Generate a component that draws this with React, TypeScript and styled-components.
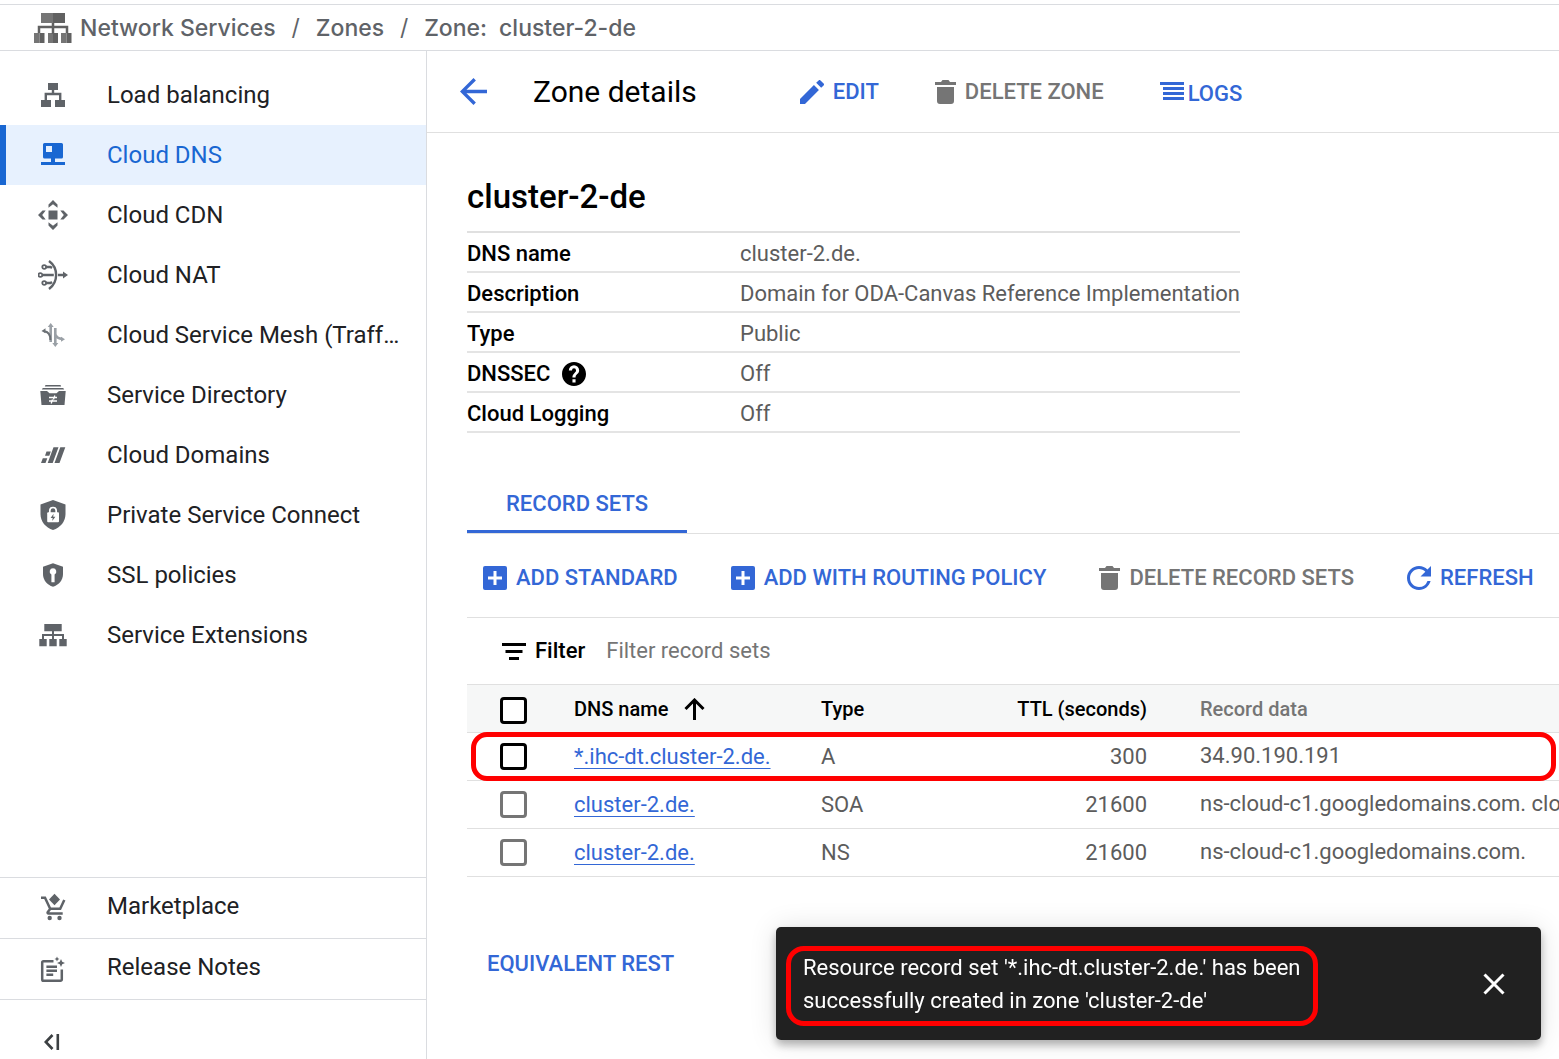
import React from "react";
import styled, { createGlobalStyle } from "styled-components";

const blue = "#3367d6";
const navBlue = "#1967d2";
const line = "#dadce0";
const rule = "#e0e0e0";
const muted = "#757575";
const bodyText = "#5c5c5c";
const iconGray = "#5f6368";

const GlobalStyle = createGlobalStyle`
  *, *::before, *::after { box-sizing: border-box; }
  body {
    margin: 0;
    background: #fff;
    color: #000;
    font-family: Roboto, "Liberation Sans", sans-serif;
    font-size: 22px;
    line-height: 28px;
  }
  button, input { font: inherit; }
  svg { display: block; flex: none; }
`;

const Page = styled.div`
  display: flex;
  flex-direction: column;
  min-height: 100vh;
  padding-top: 4px;
  overflow: hidden;
`;

const Breadcrumbs = styled.nav`
  display: flex;
  align-items: center;
  height: 47px;
  padding-left: 34px;
  border-top: 1px solid ${line};
  border-bottom: 1px solid ${line};
  color: ${iconGray};
  font-family: Inter, Roboto, sans-serif;
  font-size: 23px;
  font-weight: 500;
`;

const Crumb = styled.a`
  display: flex;
  gap: 12px;
  color: inherit;
  text-decoration: none;
`;

const FirstCrumb = styled(Crumb)`
  gap: 8px;
  align-items: center;
`;

const Slash = styled.span`
  width: 40px;
  text-align: center;
  font-weight: 400;
`;

const Columns = styled.div`
  display: flex;
  flex: 1;
`;

const Sidebar = styled.aside`
  display: flex;
  flex-direction: column;
  flex: none;
  width: 427px;
  padding-top: 14px;
  border-right: 1px solid ${line};
`;

const NavItem = styled.a<{ $active?: boolean }>`
  display: flex;
  align-items: center;
  gap: 39px;
  height: 60px;
  padding: 0 16px 0 32px;
  border-left: 6px solid ${(p) => (p.$active ? navBlue : "transparent")};
  background: ${(p) => (p.$active ? "#e7f1fe" : "transparent")};
  color: ${(p) => (p.$active ? navBlue : "#202124")};
  font-size: 24px;
  text-decoration: none;
`;

const NavLabel = styled.span`
  overflow: hidden;
  text-overflow: ellipsis;
  white-space: nowrap;
`;

const SidebarFooter = styled.div`
  display: flex;
  flex-direction: column;
  margin-top: auto;
`;

const FooterRow = styled.div`
  border-top: 1px solid ${line};
  ${NavLabel} { padding-bottom: 4px; }
`;

const Collapse = styled.button`
  display: flex;
  align-items: center;
  width: 100%;
  height: 59px;
  padding: 24px 0 0 44px;
  border: 0;
  background: none;
`;

const Main = styled.main`
  flex: 1;
  min-width: 0;
`;

const TitleBar = styled.header`
  display: flex;
  align-items: center;
  height: 82px;
  padding-left: 33px;
  border-bottom: 1px solid ${rule};
`;

const Title = styled.h1`
  margin: 0 103px 0 46px;
  font-size: 30px;
  font-weight: 400;
  line-height: 40px;
`;

const Actions = styled.div<{ $gap: number }>`
  display: flex;
  align-items: center;
  gap: ${(p) => p.$gap}px;
`;

const TextButton = styled.button<{ $muted?: boolean; $tight?: boolean }>`
  display: flex;
  align-items: center;
  gap: ${(p) => (p.$tight ? 4 : 9)}px;
  padding: ${(p) => (p.$tight ? "4px 0 0" : "0")};
  border: 0;
  background: none;
  color: ${(p) => (p.$muted ? muted : blue)};
  font-weight: 500;
  white-space: nowrap;
`;

const IconButton = styled.button`
  padding: 0;
  border: 0;
  background: none;
  color: ${blue};
`;

const Content = styled.div`
  padding-left: 40px;
`;

const ZoneName = styled.h2`
  margin: 0;
  padding: 44px 0 14px;
  font-size: 33px;
  font-weight: 500;
  line-height: 40px;
`;

const Properties = styled.table`
  border-collapse: separate;
  border-spacing: 0;
  border-top: 2px solid ${rule};
  th, td {
    height: 40px;
    padding: 4px 0 0;
    border-bottom: 2px solid #e4e4e4;
    text-align: left;
    white-space: nowrap;
  }
  th { width: 273px; font-weight: 500; }
  td { color: ${bodyText}; }
`;

const WithHelp = styled.span`
  display: flex;
  align-items: center;
  gap: 12px;
`;

const Tabs = styled.div`
  display: flex;
  margin-top: 40px;
  border-bottom: 1px solid ${rule};
`;

const Tab = styled.button`
  width: 220px;
  height: 60px;
  padding: 5px 0 0;
  border: 0;
  border-bottom: 3px solid ${blue};
  background: none;
  color: ${blue};
  font-weight: 500;
`;

const RecordBar = styled.div`
  display: flex;
  height: 84px;
  padding: 4px 0 0 16px;
  border-bottom: 1px solid ${rule};
`;

const FilterBar = styled.div`
  display: flex;
  align-items: center;
  height: 66px;
  padding-left: 35px;
`;

const FilterLabel = styled.label`
  display: flex;
  align-items: center;
  gap: 9px;
  margin-right: 21px;
  font-weight: 500;
`;

const FilterInput = styled.input`
  flex: 1;
  min-width: 0;
  padding: 0;
  border: 0;
  outline: 0;
  background: none;
  &::placeholder { color: ${muted}; opacity: 1; }
`;

const Records = styled.table`
  width: 100%;
  table-layout: fixed;
  border-collapse: separate;
  border-spacing: 0;
  border-top: 1px solid ${rule};
`;

const Row = styled.tr`
  position: relative;
`;

const HeadCell = styled.th<{ $w?: number; $end?: boolean; $muted?: boolean }>`
  width: ${(p) => (p.$w ? p.$w + "px" : "auto")};
  height: 48px;
  padding: ${(p) => (p.$muted ? "0 0 0 53px" : "0")};
  border-bottom: 1px solid ${rule};
  background: #f6f7f7;
  color: ${(p) => (p.$muted ? muted : "#000")};
  font-size: 20px;
  font-weight: 500;
  text-align: ${(p) => (p.$end ? "right" : "left")};
`;

const CheckHead = styled(HeadCell)`
  padding-top: 4px;
`;

const Sorted = styled.span`
  display: flex;
  align-items: center;
  gap: 16px;
`;

const Cell = styled.td<{ $end?: boolean }>`
  height: 48px;
  padding: 0;
  border-bottom: 1px solid ${rule};
  color: ${bodyText};
  text-align: ${(p) => (p.$end ? "right" : "left")};
  white-space: nowrap;
`;

const DataCell = styled(Cell)`
  padding: 0 0 2px 53px;
  overflow: hidden;
`;

const Check = styled.input<{ $strong?: boolean }>`
  display: block;
  appearance: none;
  width: 27px;
  height: 27px;
  margin: 0 0 0 33px;
  border: 3px solid ${(p) => (p.$strong ? "#000" : muted)};
  border-radius: 4px;
  background: #fff;
`;

const RecordLink = styled.a`
  color: ${blue};
  text-decoration: underline 1px;
  text-underline-offset: 4px;
`;

const Highlight = styled.span`
  position: absolute;
  inset: -1px 3px 0 4px;
  border: 5px solid #f00;
  border-radius: 16px;
  pointer-events: none;
`;

const RestRow = styled.div`
  padding: 73px 0 60px 20px;
`;

const Snackbar = styled.div`
  position: fixed;
  right: 18px;
  bottom: 19px;
  display: flex;
  justify-content: space-between;
  align-items: center;
  width: 765px;
  max-width: calc(100vw - 36px);
  padding: 19px 36px 14px 10px;
  border-radius: 5px;
  background: #212121;
  box-shadow: 0 5px 8px rgba(0, 0, 0, 0.28), 0 1px 28px rgba(0, 0, 0, 0.12);
  color: #fff;
`;

const Message = styled.p`
  width: 532px;
  margin: 0;
  padding: 0 0 4px 12px;
  border: 5px solid #f00;
  border-radius: 18px;
  line-height: 33px;
`;

const CloseButton = styled(IconButton)`
  padding-bottom: 4px;
  color: #fff;
`;

const NavIcon = ({ children }: { children: React.ReactNode }) => (
  <svg width="30" height="30" viewBox="0 0 30 30" fill="currentColor" aria-hidden="true">
    {children}
  </svg>
);

const stroke = { fill: "none", stroke: "currentColor" };

const icons: Record<string, React.ReactNode> = {
  load: (
    <g color={iconGray}>
      <path d="M10 3h10v7H10zM3 20h10v7H3zM17 20h10v7H17z" />
      <path {...stroke} strokeWidth="2.4" d="M15 10v4M7.8 20v-6h14.4v6" />
    </g>
  ),
  dns: (
    <path fillRule="evenodd" d="M6.5 3h17A1.5 1.5 0 0 1 25 4.500V17a1.500 1.500 0 0 1-1.500 1.500H17V22h10v3H3v-3h10v-3.500H6.500A1.500 1.500 0 0 1 5 17V4.500A1.500 1.500 0 0 1 6.500 3zM8 6v6h6V6z" />
  ),
  cdn: (
    <g color={iconGray}>
      <path d="M10.500 10.500h9v9h-9z" />
      <path d="M15 0l4.500 4.500v3.200L15 4.200l-4.500 3.500V4.500zM15 30l4.500-4.500v-3.200L15 25.800l-4.500-3.500v3.200zM0 15l4.500-4.500h3.200L4.200 15l3.500 4.500H4.500zM30 15l-4.500-4.500h-3.200l3.500 4.500-3.500 4.500h3.200z" />
    </g>
  ),
  nat: (
    <g color={iconGray}>
      <path {...stroke} strokeWidth="2.400" d="M11 1c9.500 7 9.500 21 0 28" />
      <g {...stroke} strokeWidth="1.800">
        <circle cx="6.200" cy="7" r="1.900" />
        <circle cx="2.400" cy="15" r="1.900" />
        <circle cx="6.200" cy="23" r="1.900" />
      </g>
      <path {...stroke} strokeWidth="2.400" d="M8 7h4.500l1.500 1M4.400 15h11.400M8 23h4.500l1.500-1M20 15h6" />
      <path d="M25 11.500l5 3.500-5 3.500z" />
    </g>
  ),
  mesh: (
    <g>
      <g color="#9aa0a6">
        <path {...stroke} strokeWidth="2.600" d="M12.700 5.500V22M17.300 8v15.500M17.300 14.500c1.500 3.500 4 4.300 7 4.500" />
        <path d="M12.700 3l3 4h-6zM17.300 27l3-4h-6zM27 19.200l-4 2.600v-5z" />
      </g>
      <g color="#6b7075">
        <path {...stroke} strokeWidth="2" d="M12.400 20c0-6-2.400-8.500-6.400-8.800" />
        <path d="M3.500 11l4-2.700v5z" />
      </g>
    </g>
  ),
  directory: (
    <g color={iconGray}>
      <path d="M7.500 5h15l.7 1.500H6.800zM4.800 8h20.400l1 1.600H3.800z" />
      <path d="M2.300 11h6.700l2.500 2.200h7L21 11h6.700l-1.200 14H3.500z" />
      <path fill="none" stroke="#fff" strokeWidth="1.300" d="M11 17.500h8M11 21h8M16.800 15.500l-1.300 4M14.500 19.500l-1.300 4" />
    </g>
  ),
  domains: (
    <path color={iconGray} d="M22.300 7.300h5L21.500 23h-5zM15.500 7.300h5L14.700 23h-5zM8.500 11.500h4.300L11.300 15.800H7zM4.800 18.200h4.500L7.500 23H3z" />
  ),
  psc: (
    <g color={iconGray}>
      <path d="M15 0l12.500 4.500V14c0 7.500-5 13.500-12.500 16C7.500 27.500 2.500 21.500 2.500 14V4.500z" />
      <rect x="9.200" y="12.300" width="11.800" height="10" rx="1" fill="#fff" />
      <path fill="none" stroke="#fff" strokeWidth="1.700" d="M11.800 13v-2.300a3.200 3.200 0 0 1 6.400 0V13" />
      <path d="M15.600 13.800l-3 4.300h2.100l-.5 3 3.200-4.300h-2.200z" />
    </g>
  ),
  ssl: (
    <g color={iconGray}>
      <path d="M15 3.200l10 3.600V14c0 6-4 10.800-10 12.800C9 24.800 5 20 5 14V6.800z" />
      <path fill="#fff" d="M15 8.300a3.300 3.300 0 0 1 1.600 6.200v7.700h-3.200v-7.700A3.300 3.300 0 0 1 15 8.300z" />
    </g>
  ),
  extensions: (
    <g color={iconGray}>
      <path d="M6.300 4h17.400v7.300H6.300zM1.300 19h7.400v7.300H1.300zM11.300 19h7.400v7.300h-7.400zM21.300 19h7.400v7.300h-7.400z" />
      <path {...stroke} strokeWidth="2" d="M15 11v9M5 20v-5h20v5" />
    </g>
  ),
  marketplace: (
    <g color={iconGray}>
      <path {...stroke} strokeWidth="2.500" d="M3 4.700h4l5.200 11h10L26.300 7M12.300 15.700l-2.600 3.500c-.4.700 0 1.200.8 1.200h14.200" />
      <path d="M16.500.8l5.500 5.800-5.500 5.600L11 6.600z" />
      <circle cx="11.700" cy="25" r="2.200" />
      <circle cx="21.500" cy="25" r="2.200" />
    </g>
  ),
  notes: (
    <g color={iconGray}>
      <path {...stroke} strokeWidth="2.500" d="M15.500 7.200H5.500a1.300 1.300 0 0 0-1.300 1.300v17a1.300 1.300 0 0 0 1.300 1.300h17a1.300 1.300 0 0 0 1.300-1.300V15.500M8.400 12.700h10.600M8.400 16.700h10.600M8.400 20.700h6.800" />
      <path d="M23 5l1.200 2.800L27 9l-2.800 1.200L23 13l-1.200-2.800L19 9l2.800-1.200zM19 2.500l.8 1.700 1.700.8-1.700.8-.8 1.700-.8-1.700-1.700-.8 1.700-.8z" />
    </g>
  ),
};

const Plus = () => (
  <svg width="24" height="24" viewBox="0 0 24 24" fill="currentColor" aria-hidden="true">
    <rect width="24" height="24" rx="2" />
    <path fill="none" stroke="#fff" strokeWidth="3" d="M12 5v14M5 12h14" />
  </svg>
);

const Trash = () => (
  <svg width="21" height="24" viewBox="0 0 21 24" fill="currentColor" aria-hidden="true">
    <path d="M0 2h6l1.500-2h6L15 2h6v3H0zM2 7h17v14a3 3 0 0 1-3 3H5a3 3 0 0 1-3-3z" />
  </svg>
);

const nav = [
  ["load", "Load balancing"],
  ["dns", "Cloud DNS"],
  ["cdn", "Cloud CDN"],
  ["nat", "Cloud NAT"],
  ["mesh", "Cloud Service Mesh (Traff…"],
  ["directory", "Service Directory"],
  ["domains", "Cloud Domains"],
  ["psc", "Private Service Connect"],
  ["ssl", "SSL policies"],
  ["extensions", "Service Extensions"],
];

const footerNav = [
  ["marketplace", "Marketplace"],
  ["notes", "Release Notes"],
];

const records = [
  { name: "*.ihc-dt.cluster-2.de.", type: "A", ttl: "300", data: "34.90.190.191", isNew: true },
  { name: "cluster-2.de.", type: "SOA", ttl: "21600", data: "ns-cloud-c1.googledomains.com. cloud" },
  { name: "cluster-2.de.", type: "NS", ttl: "21600", data: "ns-cloud-c1.googledomains.com." },
];

export default function App() {
  return (
    <Page>
      <GlobalStyle />
      <Breadcrumbs aria-label="Breadcrumb">
        <FirstCrumb href="#">
          <svg width="38" height="30" viewBox="0 0 38 30" aria-hidden="true">
            <path fill="#757575" d="M7 0h12v10H7zM0 20h5.500v10H0zM14 20h5v10h-5zM27 20h5.500v10H27z" />
            <path fill="#616161" d="M19 0h12v10H19zM5.500 20h5v10h-5zM19 20h5v10h-5zM32.500 20h5v10h-5z" />
            <path fill="none" stroke="#616161" strokeWidth="2.500" d="M19 10v11M5 20v-6h28v6" />
          </svg>
          Network Services
        </FirstCrumb>
        <Slash>/</Slash>
        <Crumb href="#">Zones</Crumb>
        <Slash>/</Slash>
        <Crumb href="#">
          <span>Zone:</span>
          <span>cluster-2-de</span>
        </Crumb>
      </Breadcrumbs>

      <Columns>
        <Sidebar>
          {nav.map(([icon, label]) => (
            <NavItem key={icon} href="#" $active={icon === "dns"}>
              <NavIcon>{icons[icon]}</NavIcon>
              <NavLabel>{label}</NavLabel>
            </NavItem>
          ))}
          <SidebarFooter>
            {footerNav.map(([icon, label]) => (
              <FooterRow key={icon}>
                <NavItem href="#">
                  <NavIcon>{icons[icon]}</NavIcon>
                  <NavLabel>{label}</NavLabel>
                </NavItem>
              </FooterRow>
            ))}
            <FooterRow>
              <Collapse aria-label="Collapse navigation">
                <svg width="16" height="16" viewBox="0 0 16 16" fill="none" stroke="#3c4043" strokeWidth="2.600" aria-hidden="true">
                  <path d="M8.500 1L1.800 8l6.700 7M13.800 0v16" />
                </svg>
              </Collapse>
            </FooterRow>
          </SidebarFooter>
        </Sidebar>

        <Main>
          <TitleBar>
            <IconButton aria-label="Back">
              <svg width="27" height="27" viewBox="4 4 16 16" fill="currentColor" aria-hidden="true">
                <path d="M20 11H7.830l5.590-5.590L12 4l-8 8 8 8 1.410-1.410L7.830 13H20v-2z" />
              </svg>
            </IconButton>
            <Title>Zone details</Title>
            <Actions $gap={56}>
              <TextButton>
                <svg width="24" height="24" viewBox="3 3 18 18" fill="currentColor" aria-hidden="true">
                  <path d="M3 17.250V21h3.750L17.200 10.550l-3.750-3.750L3 17.250zM20.710 7.040a1 1 0 0 0 0-1.410l-2.340-2.340a1 1 0 0 0-1.410 0L15.130 5.120l3.750 3.750 1.830-1.830z" />
                </svg>
                EDIT
              </TextButton>
              <TextButton $muted>
                <Trash />
                DELETE ZONE
              </TextButton>
              <TextButton $tight>
                <svg width="24" height="24" viewBox="0 0 24 24" fill="currentColor" aria-hidden="true">
                  <path d="M0 0h24v3H0zM3 5h21v3H3zM3 10h21v3H3zM3 15h21v3H3z" />
                </svg>
                LOGS
              </TextButton>
            </Actions>
          </TitleBar>

          <Content>
            <ZoneName>cluster-2-de</ZoneName>
            <Properties>
              <tbody>
                <tr><th scope="row">DNS name</th><td>cluster-2.de.</td></tr>
                <tr><th scope="row">Description</th><td>Domain for ODA-Canvas Reference Implementation</td></tr>
                <tr><th scope="row">Type</th><td>Public</td></tr>
                <tr>
                  <th scope="row">
                    <WithHelp>
                      DNSSEC
                      <svg width="24" height="24" viewBox="2 2 20 20" aria-hidden="true">
                        <path d="M12 2C6.480 2 2 6.480 2 12s4.480 10 10 10 10-4.480 10-10S17.520 2 12 2zm1.300 17h-2.600v-2.600h2.600V19zm2.100-7.700l-.9.900c-.7.700-1.200 1.300-1.200 2.800h-2.600v-.5c0-1.100.5-2.100 1.200-2.800l1.200-1.300c.4-.4.600-.9.600-1.400a1.700 1.700 0 0 0-3.400 0H7.700a4.300 4.300 0 0 1 8.600 0c0 .9-.4 1.700-.9 2.300z" />
                      </svg>
                    </WithHelp>
                  </th>
                  <td>Off</td>
                </tr>
                <tr><th scope="row">Cloud Logging</th><td>Off</td></tr>
              </tbody>
            </Properties>

            <Tabs role="tablist">
              <Tab role="tab" aria-selected="true">RECORD SETS</Tab>
            </Tabs>

            <RecordBar>
              <Actions $gap={53}>
                <TextButton><Plus />ADD STANDARD</TextButton>
                <TextButton><Plus />ADD WITH ROUTING POLICY</TextButton>
                <TextButton $muted><Trash />DELETE RECORD SETS</TextButton>
                <TextButton>
                  <svg width="24" height="24" viewBox="4 4 16 16" fill="currentColor" aria-hidden="true">
                    <path d="M17.650 6.350A7.958 7.958 0 0 0 12 4c-4.420 0-7.990 3.580-7.990 8s3.570 8 7.990 8c3.730 0 6.840-2.550 7.730-6h-2.080A5.990 5.990 0 0 1 12 18c-3.310 0-6-2.690-6-6s2.690-6 6-6c1.660 0 3.140.690 4.220 1.780L13 11h7V4l-2.350 2.350z" />
                  </svg>
                  REFRESH
                </TextButton>
              </Actions>
            </RecordBar>

            <FilterBar>
              <FilterLabel htmlFor="filter">
                <svg width="24" height="17" viewBox="0 0 24 17" aria-hidden="true">
                  <path d="M0 0h24v3H0zM3.500 7h17v3h-17zM7 14h10v3H7z" />
                </svg>
                Filter
              </FilterLabel>
              <FilterInput id="filter" placeholder="Filter record sets" />
            </FilterBar>

            <Records>
              <thead>
                <tr>
                  <CheckHead $w={107}><Check type="checkbox" $strong aria-label="Select all" /></CheckHead>
                  <HeadCell $w={247}>
                    <Sorted>
                      DNS name
                      <svg width="21" height="22" viewBox="0 0 21 22" fill="none" stroke="#000" strokeWidth="3" aria-hidden="true">
                        <path d="M10.500 22V2.500M1.500 11l9-9 9 9" />
                      </svg>
                    </Sorted>
                  </HeadCell>
                  <HeadCell $w={163}>Type</HeadCell>
                  <HeadCell $w={163} $end>TTL (seconds)</HeadCell>
                  <HeadCell $muted>Record data</HeadCell>
                </tr>
              </thead>
              <tbody>
                {records.map((r) => (
                  <Row key={r.type}>
                    <Cell>
                      <Check type="checkbox" $strong={r.isNew} aria-label={"Select " + r.name} />
                      {r.isNew && <Highlight />}
                    </Cell>
                    <Cell><RecordLink href="#">{r.name}</RecordLink></Cell>
                    <Cell>{r.type}</Cell>
                    <Cell $end>{r.ttl}</Cell>
                    <DataCell>{r.data}</DataCell>
                  </Row>
                ))}
              </tbody>
            </Records>

            <RestRow>
              <TextButton>EQUIVALENT REST</TextButton>
            </RestRow>
          </Content>
        </Main>
      </Columns>

      <Snackbar role="status">
        <Message>
          Resource record set '*.ihc-dt.cluster-2.de.' has been successfully created in zone 'cluster-2-de'
        </Message>
        <CloseButton aria-label="Close">
          <svg width="22" height="22" viewBox="0 0 22 22" fill="none" stroke="currentColor" strokeWidth="3" aria-hidden="true">
            <path d="M1.500 1.500l19 19M20.500 1.500l-19 19" />
          </svg>
        </CloseButton>
      </Snackbar>
    </Page>
  );
}
